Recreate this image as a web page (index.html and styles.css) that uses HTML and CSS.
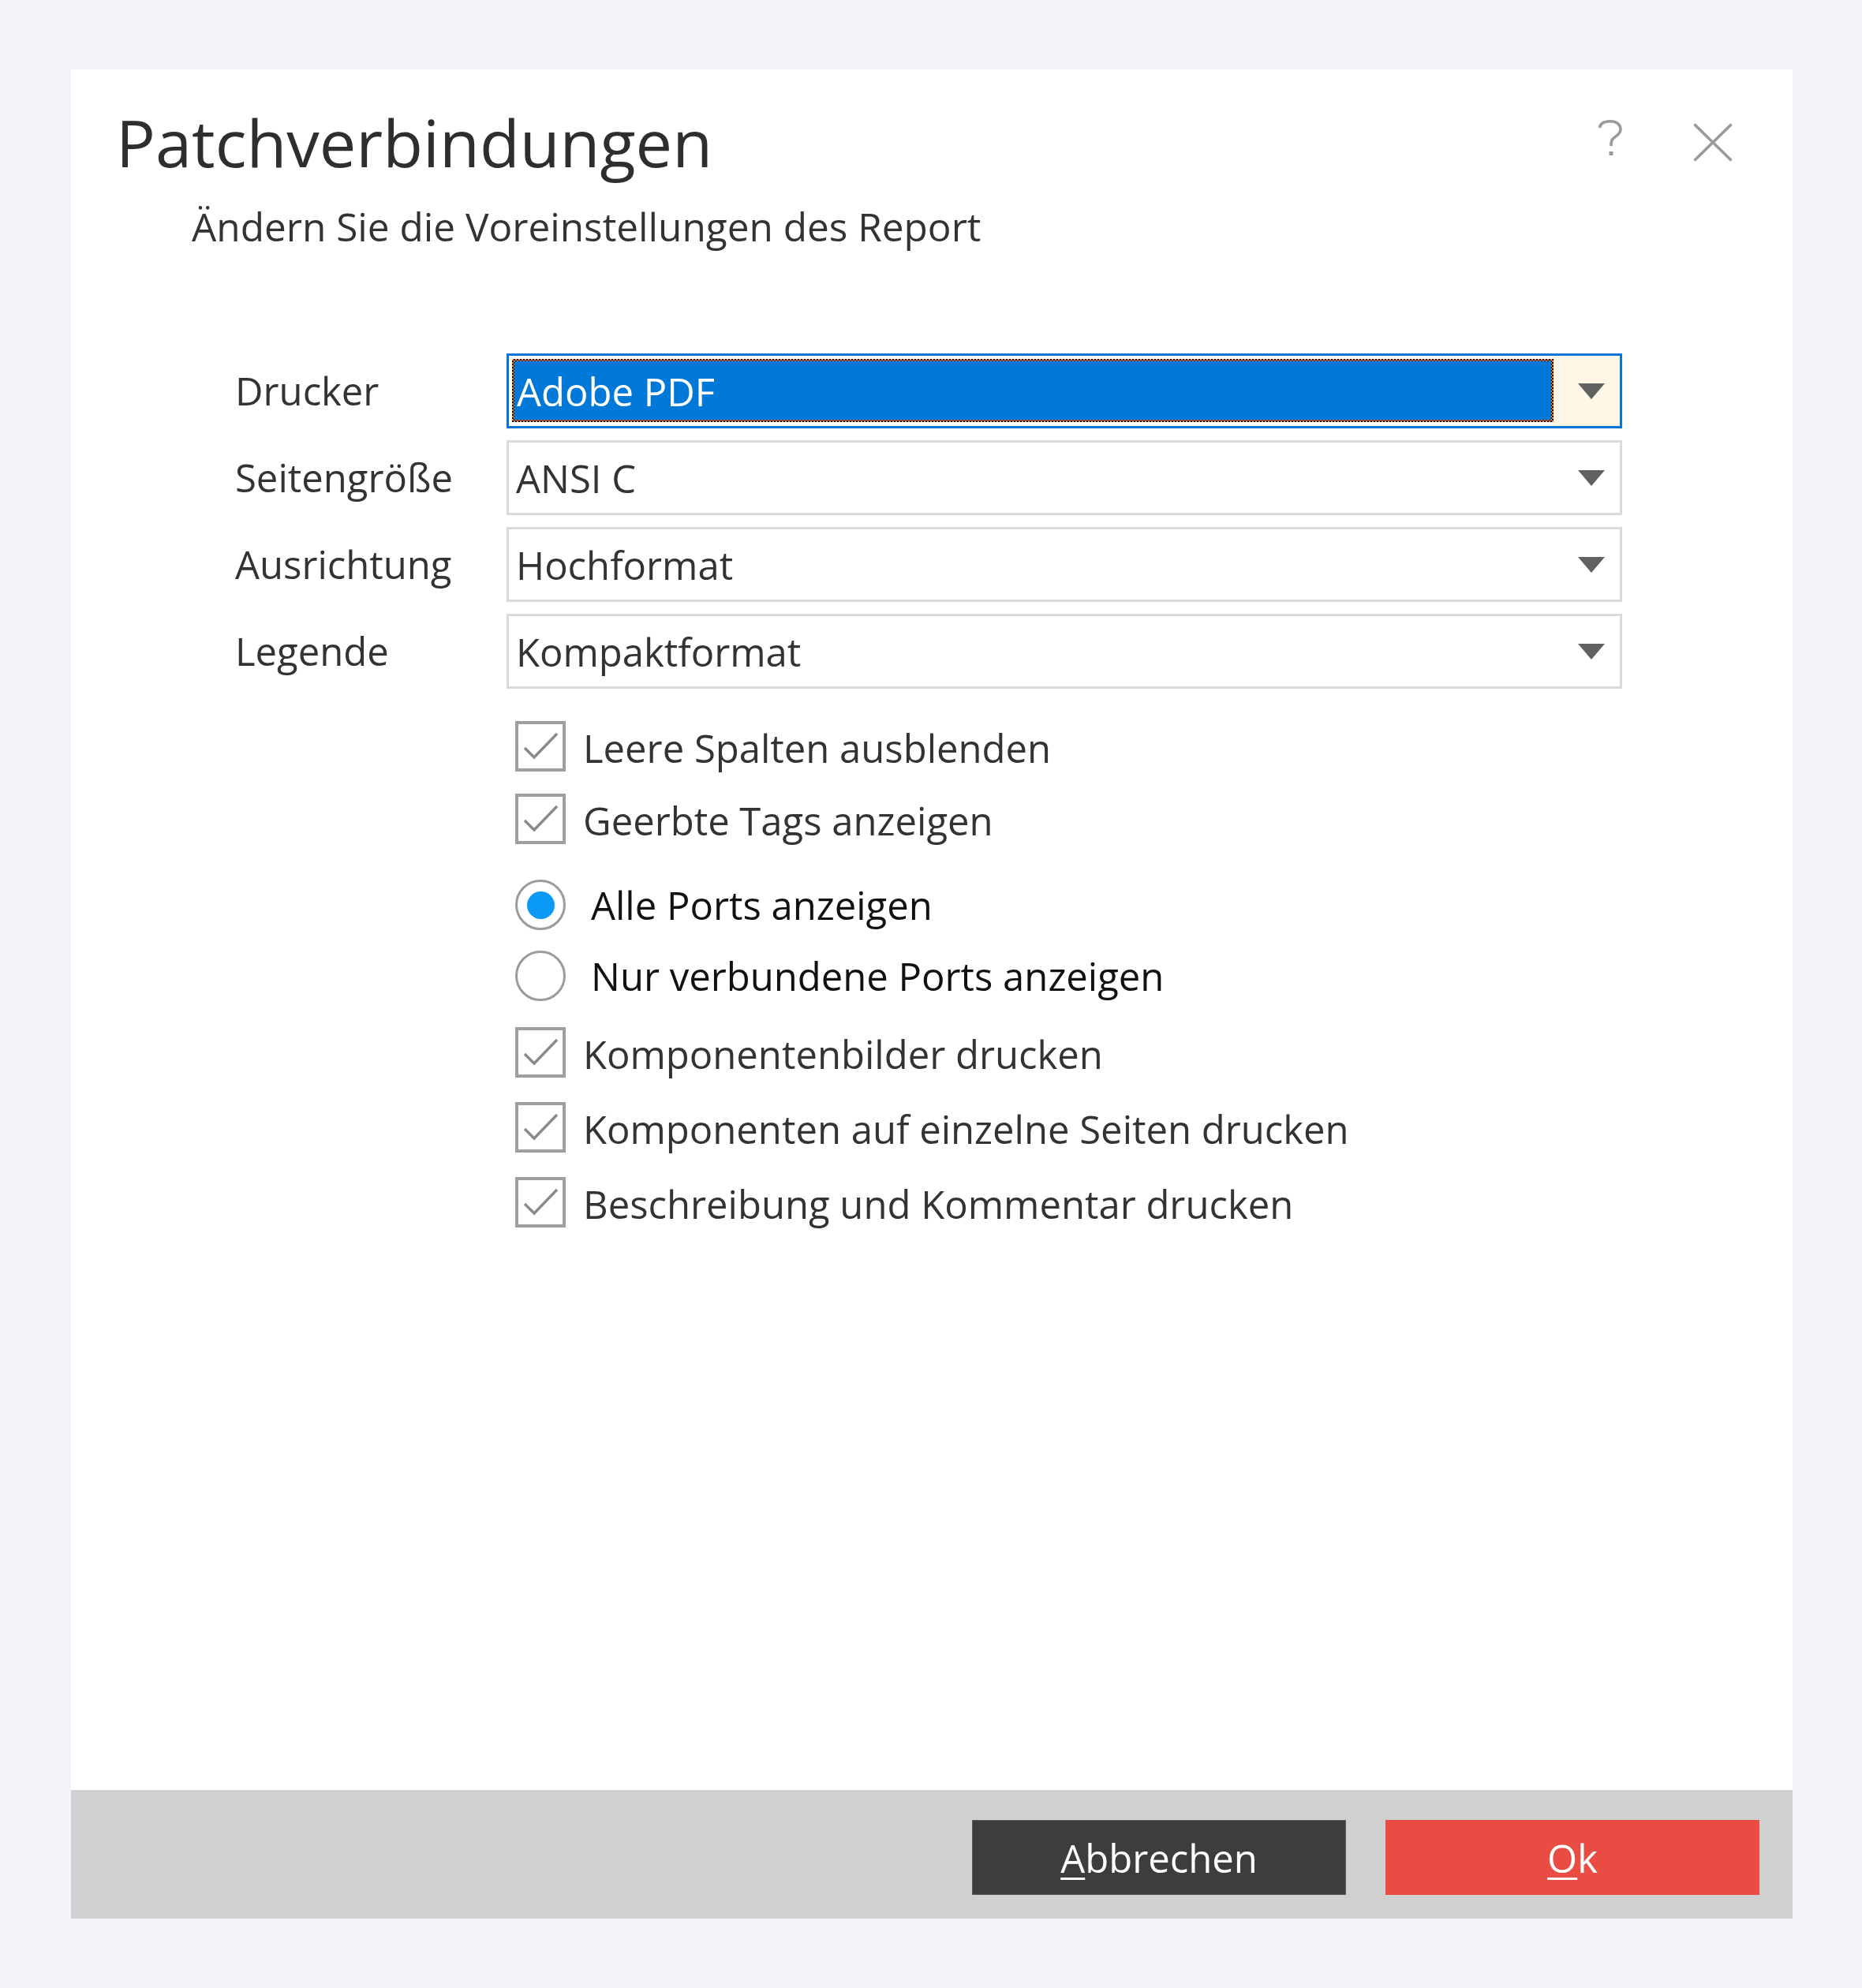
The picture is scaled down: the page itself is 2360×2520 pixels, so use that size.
FILE: index.html
```html
<!DOCTYPE html>
<html lang="de">
<head>
<meta charset="utf-8">
<title>Patchverbindungen</title>
<link rel="stylesheet" href="styles.css">
</head>
<body>
<div class="dialog">
  <div class="header">
    <div class="heading">
      <h1 class="title">Patchverbindungen</h1>
      <p class="subtitle">Ändern Sie die Voreinstellungen des Report</p>
    </div>
    <div class="header-icons">
      <svg class="icon-help" width="34" height="48" viewBox="0 0 34 48" aria-label="Hilfe">
        <path d="M3.5 10 C4.5 3.5 10 1.8 17 1.8 C25 1.8 30 6 30 12 C30 19 22 21 19.5 25 C18.2 27 18 29 18 33" fill="none" stroke="#9a9a9a" stroke-width="3.6" stroke-linecap="butt"/>
        <rect x="15.5" y="40" width="5" height="5" fill="#9a9a9a"/>
      </svg>
      <svg class="icon-close" width="50" height="49" viewBox="0 0 50 49" aria-label="Schließen">
        <path d="M1.5 1.5 L48.5 47.5 M48.5 1.5 L1.5 47.5" fill="none" stroke="#9a9a9a" stroke-width="3.6"/>
      </svg>
    </div>
  </div>

  <div class="form">
    <div class="label">Drucker</div>
    <div class="select focused">
      <div class="focus-ring"><div class="focus-fill">Adobe PDF</div></div>
      <div class="arrow-cell"><span class="arrow"></span></div>
    </div>

    <div class="label">Seitengröße</div>
    <div class="select">
      <div class="value">ANSI C</div>
      <div class="arrow-cell"><span class="arrow"></span></div>
    </div>

    <div class="label">Ausrichtung</div>
    <div class="select">
      <div class="value">Hochformat</div>
      <div class="arrow-cell"><span class="arrow"></span></div>
    </div>

    <div class="label">Legende</div>
    <div class="select">
      <div class="value">Kompaktformat</div>
      <div class="arrow-cell"><span class="arrow"></span></div>
    </div>

    <div class="options">
      <div class="group">
        <div class="option">
          <span class="checkbox"><svg width="56" height="56" viewBox="0 0 56 56"><path d="M8 30 L20 42 L49 12" fill="none" stroke="#8a8a8a" stroke-width="3.4"/></svg></span>
          <span class="check-text">Leere Spalten ausblenden</span>
        </div>
        <div class="option">
          <span class="checkbox"><svg width="56" height="56" viewBox="0 0 56 56"><path d="M8 30 L20 42 L49 12" fill="none" stroke="#8a8a8a" stroke-width="3.4"/></svg></span>
          <span class="check-text">Geerbte Tags anzeigen</span>
        </div>
      </div>
      <div class="group radios">
        <div class="option">
          <span class="radio checked"><span class="dot"></span></span>
          <span class="radio-text">Alle Ports anzeigen</span>
        </div>
        <div class="option">
          <span class="radio"></span>
          <span class="radio-text">Nur verbundene Ports anzeigen</span>
        </div>
      </div>
      <div class="group print">
        <div class="option">
          <span class="checkbox"><svg width="56" height="56" viewBox="0 0 56 56"><path d="M8 30 L20 42 L49 12" fill="none" stroke="#8a8a8a" stroke-width="3.4"/></svg></span>
          <span class="check-text">Komponentenbilder drucken</span>
        </div>
        <div class="option">
          <span class="checkbox"><svg width="56" height="56" viewBox="0 0 56 56"><path d="M8 30 L20 42 L49 12" fill="none" stroke="#8a8a8a" stroke-width="3.4"/></svg></span>
          <span class="check-text">Komponenten auf einzelne Seiten drucken</span>
        </div>
        <div class="option">
          <span class="checkbox"><svg width="56" height="56" viewBox="0 0 56 56"><path d="M8 30 L20 42 L49 12" fill="none" stroke="#8a8a8a" stroke-width="3.4"/></svg></span>
          <span class="check-text">Beschreibung und Kommentar drucken</span>
        </div>
      </div>
    </div>
  </div>

  <div class="footer">
    <button class="btn btn-cancel" type="button"><span class="mnemonic">A</span>bbrechen</button>
    <button class="btn btn-ok" type="button"><span class="mnemonic">O</span>k</button>
  </div>
</div>
</body>
</html>
```

FILE: styles.css
```css
html {
  background: #f3f4f8;
}

body {
  margin: 0;
  min-height: 2520px;
  background: #f3f4f8;
  font-family: "Open Sans", "Noto Sans", "DejaVu Sans", sans-serif;
  font-size: 49px;
  line-height: 60px;
  color: #333333;
}

.dialog {
  width: 2182px;
  height: 2344px;
  margin: 88px 0 0 90px;
  background: #ffffff;
  display: flex;
  flex-direction: column;
}

/* ---------- header ---------- */
.header {
  display: flex;
  justify-content: space-between;
  align-items: flex-start;
  padding: 42px 76px 0 57px;
}

.title {
  margin: 0;
  font-size: 83px;
  line-height: 100px;
  font-weight: 400;
  color: #2e2e2e;
}

.subtitle {
  margin: 27px 0 0 96px;
  font-size: 49.5px;
  line-height: 60px;
  color: #333333;
}

.header-icons {
  display: flex;
  align-items: flex-start;
  gap: 88px;
  padding-top: 22px;
}

.icon-close {
  margin-top: 4px;
}

/* ---------- form ---------- */
.form {
  display: grid;
  grid-template-columns: 344px 1414px;
  row-gap: 15px;
  margin: 131px 0 0 208px;
}

.label {
  align-self: center;
  color: #333333;
  line-height: 60px;
  padding-bottom: 2px;
}

.select {
  height: 95px;
  box-sizing: border-box;
  border: 3px solid #dadada;
  background: #ffffff;
  display: flex;
  align-items: stretch;
}

.select .value {
  flex: 1;
  display: flex;
  align-items: center;
  padding-left: 9px;
  padding-top: 1px;
  color: #333333;
}

.arrow-cell {
  width: 84px;
  display: flex;
  align-items: center;
  justify-content: center;
  padding-left: 12px;
  box-sizing: border-box;
}

.arrow {
  width: 0;
  height: 0;
  border-left: 17px solid transparent;
  border-right: 17px solid transparent;
  border-top: 20px solid #616161;
}

.select.focused {
  border-color: #0a74d6;
  background: #ffffff;
}

.select.focused .arrow-cell {
  background: #fdf6e6;
}

.focus-ring {
  flex: 1;
  margin: 4px 0 5px 4px;
  padding: 3px;
  background: repeating-conic-gradient(#000000 0% 25%, #ff8a1c 0% 50%) 0 0 / 4px 4px;
  display: flex;
}

.focus-fill {
  flex: 1;
  background: #0078d7;
  color: #ffffff;
  display: flex;
  align-items: center;
  padding-left: 3px;
  padding-top: 1px;
}

/* ---------- options ---------- */
.options {
  grid-column: 2;
  margin-top: 26px;
  padding-left: 11px;
  display: flex;
  flex-direction: column;
}

.group {
  display: flex;
  flex-direction: column;
  gap: 28px;
}

.group.radios {
  margin-top: 45px;
  gap: 26px;
}

.group.print {
  margin-top: 33px;
  gap: 31px;
}

.option {
  display: flex;
  align-items: center;
  height: 64px;
}

.checkbox {
  width: 64px;
  height: 64px;
  box-sizing: border-box;
  border: 4px solid #9f9f9f;
  background: #ffffff;
  display: flex;
  flex-shrink: 0;
}

.check-text {
  margin-left: 22px;
  color: #333333;
  padding-top: 4px;
}

.radio {
  width: 64px;
  height: 64px;
  box-sizing: border-box;
  border: 3px solid #9b9b9b;
  border-radius: 50%;
  background: #ffffff;
  display: flex;
  align-items: center;
  justify-content: center;
  flex-shrink: 0;
}

.radio .dot {
  width: 35px;
  height: 35px;
  border-radius: 50%;
  background: #0a9af6;
}

.radio-text {
  margin-left: 32px;
  color: #111111;
  padding-top: 0;
}

/* ---------- footer ---------- */
.footer {
  margin-top: auto;
  height: 163px;
  box-sizing: border-box;
  background: #d0d0d0;
  display: flex;
  justify-content: flex-end;
  align-items: flex-start;
  gap: 50px;
  padding: 38px 42px 0 0;
}

.btn {
  width: 474px;
  height: 95px;
  box-sizing: border-box;
  font-family: "Open Sans", "Noto Sans", "DejaVu Sans", sans-serif;
  font-size: 49px;
  line-height: 60px;
  color: #ffffff;
  padding: 0;
  cursor: pointer;
}

.btn-cancel {
  background: #3d3d3d;
  border: 1px solid #5a5a5a;
}

.btn-ok {
  background: #e84c43;
  border: 1px solid #e84c43;
}

.mnemonic {
  text-decoration: underline;
  text-decoration-thickness: 3px;
  text-underline-offset: 6px;
}
```
